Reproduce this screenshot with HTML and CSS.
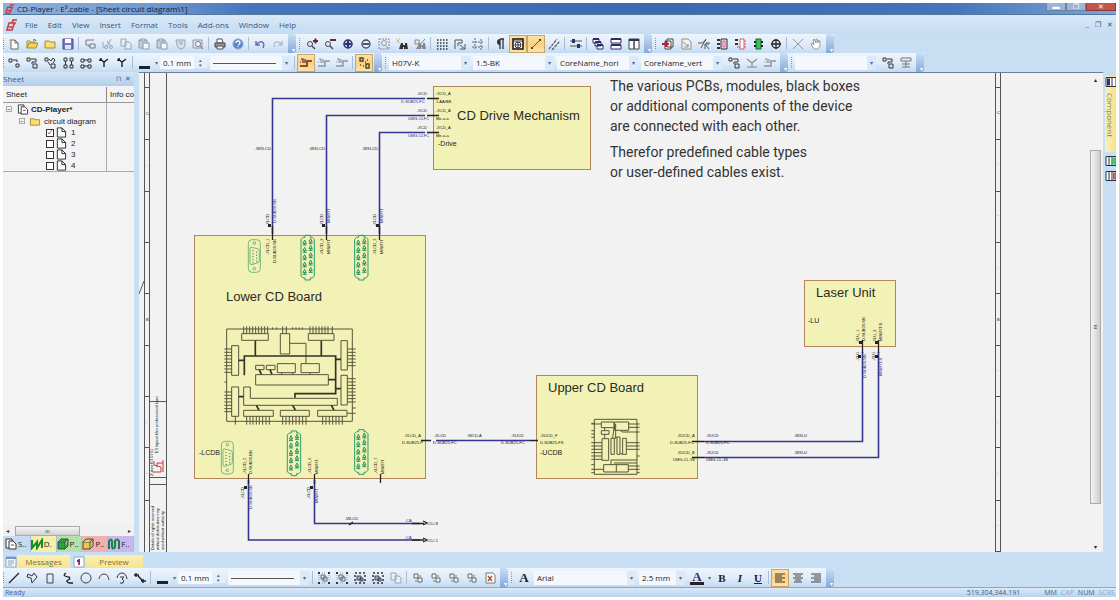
FILE: index.html
```html
<!DOCTYPE html>
<html lang="en">
<head>
<meta charset="utf-8">
<title>CD-Player - E³.cable</title>
<link rel="stylesheet" href="styles.css">
</head>
<body>
<svg class="defs" aria-hidden="true">
  <symbol id="new" viewBox="0 0 12 12"><path d="M3 2h4l3 3v6H3z" fill="#fff" stroke="#666"/><path d="M7 2v3h3" fill="none" stroke="#666"/><path d="M1 3l3-2M2 1l2 3" stroke="#e8a820"/></symbol>
  <symbol id="open" viewBox="0 0 12 12"><path d="M1 10V3h3l1 1h4v2" fill="#f7df86" stroke="#a98a2c"/><path d="M1 10l2-5h9l-2 5z" fill="#f6d25a" stroke="#a98a2c"/><path d="M7 2q3-1 3 1" fill="none" stroke="#447"/></symbol>
  <symbol id="folder" viewBox="0 0 12 12"><path d="M1 10V3h4l1 1h5v6z" fill="#f8dd78" stroke="#a98a2c"/></symbol>
  <symbol id="save" viewBox="0 0 12 12"><path d="M1 1h10v10H1z" fill="#7673c8" stroke="#4a4796"/><path d="M3 1h6v4H3z" fill="#fff"/><path d="M3 7h6v4H3z" fill="#dfe3f8"/></symbol>
  <symbol id="plug" viewBox="0 0 12 12"><path d="M10 2H2v5h3M6 6h5v4H6zM6 8H4" fill="none" stroke="#777"/></symbol>
  <symbol id="cut" viewBox="0 0 12 12"><path d="M9 1L5 8M5 3l4 5M1 4v6" stroke="#9aa6b4" fill="none"/><circle cx="4" cy="9" r="1.5" fill="none" stroke="#9aa6b4"/><circle cx="9" cy="9" r="1.5" fill="none" stroke="#9aa6b4"/></symbol>
  <symbol id="copy" viewBox="0 0 12 12"><path d="M1 1h5v7H1zM5 4h4l2 2v5H5z" fill="#e9eef4" stroke="#9aa6b4"/></symbol>
  <symbol id="paste" viewBox="0 0 12 12"><path d="M1 2h8v8H1z" fill="#c8d0da" stroke="#8d98a6"/><path d="M3 1h4v2H3zM5 5h6v6H5z" fill="#f3f6f9" stroke="#8d98a6"/></symbol>
  <symbol id="shield" viewBox="0 0 12 12"><path d="M2 2h9v5q0 3-4 4-4-1-4-4z" fill="#dde3ea" stroke="#98a3b0"/><path d="M4 4h5M5 6h4" stroke="#98a3b0"/></symbol>
  <symbol id="find" viewBox="0 0 12 12"><path d="M1 2h9v8H1z" fill="#dde3ea" stroke="#8d98a6"/><circle cx="6" cy="6" r="2.5" fill="#fff" stroke="#778"/><path d="M8 8l3 3" stroke="#778"/></symbol>
  <symbol id="print" viewBox="0 0 12 12"><path d="M3 1h5l1 4H3z" fill="#fff" stroke="#555"/><path d="M1 5h10v4H1z" fill="#999" stroke="#444"/><path d="M3 8h6v3H3z" fill="#eee" stroke="#555"/></symbol>
  <symbol id="help" viewBox="0 0 12 12"><circle cx="6" cy="6" r="5" fill="#5687d2" stroke="#8ba5c8"/><path d="M4 5q0-2 2-2t2 2q0 1-2 2M6 8v1" fill="none" stroke="#fff" stroke-width="1.3"/></symbol>
  <symbol id="undo" viewBox="0 0 12 12"><path d="M2 3v4h4M2 7q3-4 6-3t1 6" fill="none" stroke="#5d77ae" stroke-width="1.5"/></symbol>
  <symbol id="redo" viewBox="0 0 12 12"><path d="M10 3v4H6M10 7Q7 3 4 4t-1 5" fill="none" stroke="#a9b5c6" stroke-width="1.2"/></symbol>
  <symbol id="zin" viewBox="0 0 12 12"><circle cx="4" cy="6" r="2.5" fill="none" stroke="#444"/><path d="M6 8l3 3" stroke="#444" stroke-width="1.3"/><path d="M7 3h5M9.500 .5v5" stroke="#701f3c" stroke-width="2"/></symbol>
  <symbol id="zout" viewBox="0 0 12 12"><circle cx="4" cy="6" r="2.500" fill="none" stroke="#444"/><path d="M6 8l3 3" stroke="#444" stroke-width="1.3"/><path d="M6 2h6" stroke="#701f3c" stroke-width="2"/></symbol>
  <symbol id="cplus" viewBox="0 0 12 12"><circle cx="6" cy="6" r="4" fill="#c9cdf0" stroke="#2b2d58" stroke-width="1.5"/><path d="M3 6h6M6 3v6" stroke="#2b2d7a" stroke-width="2"/></symbol>
  <symbol id="cminus" viewBox="0 0 12 12"><circle cx="6" cy="6" r="4" fill="#e6e8f6" stroke="#444664" stroke-width="1.3"/><path d="M3 6h6" stroke="#2b2d58" stroke-width="1.6"/></symbol>
  <symbol id="zarea" viewBox="0 0 12 12"><path d="M1 1h10v10H1z" fill="none" stroke="#888" stroke-dasharray="2 1"/><circle cx="6" cy="5" r="2.5" fill="none" stroke="#999"/><path d="M7 7l3 3" stroke="#999"/></symbol>
  <symbol id="binoc" viewBox="0 0 12 12"><path d="M5 5h2v2h2V5h2l1 6H8V9H7v2H3z" fill="#333"/><path d="M0 1l4 4M4 0L1 5" stroke="#c9cf52"/></symbol>
  <symbol id="binoc2" viewBox="0 0 12 12"><path d="M5 5h2v2h2V5h2l1 6H8V9H7v2H3z" fill="#888"/><path d="M1 2h4v4H1zM2 11L11 1" stroke="#888" fill="none"/></symbol>
  <symbol id="grid" viewBox="0 0 12 12"><path d="M1 2h11M1 5h11M1 8h11M1 11h11" stroke="#333" stroke-width="1.5" stroke-dasharray="1.5 1.5"/></symbol>
  <symbol id="snap" viewBox="0 0 12 12"><path d="M1 11V2h7v3H4v3" fill="none" stroke="#555"/><path d="M6 7l5 4M6 11h5V6" fill="none" stroke="#555"/></symbol>
  <symbol id="cross" viewBox="0 0 12 12"><path d="M3 0v11M9 1v11M0 4h12M0 9h12" stroke="#667" stroke-dasharray="2 1"/></symbol>
  <symbol id="para" viewBox="0 0 12 12"><path d="M6 1h4M6 1v10M9 1v10" stroke="#333" stroke-width="1.3"/><path d="M6 1v6Q3 7 3 4t3-3" fill="#333"/></symbol>
  <symbol id="frame" viewBox="0 0 12 12"><path d="M1 1h10v10H1z" fill="#fff" stroke="#111" stroke-width="1.5"/><circle cx="6" cy="7" r="3" fill="none" stroke="#333"/><path d="M1 3h10M3 7h6M6 4v6" stroke="#333"/></symbol>
  <symbol id="diag" viewBox="0 0 12 12"><path d="M2 10L10 2" stroke="#555"/><path d="M1 9h2v2H1zM9 1h2v2H9z" fill="#444"/></symbol>
  <symbol id="diag2" viewBox="0 0 12 12"><path d="M1 11L9 1M4 12L12 3" stroke="#556" stroke-width="1.2" stroke-dasharray="3 1"/></symbol>
  <symbol id="slide" viewBox="0 0 12 12"><path d="M0 3h12M0 8h12" stroke="#555"/><path d="M2 1h3v4H2zM7 6h3v4H7z" fill="#236"/></symbol>
  <symbol id="casc" viewBox="0 0 12 12"><path d="M1 1h6v4H1zM3 4h6v4H3zM5 7h6v4H5z" fill="#fff" stroke="#2d2f66"/><path d="M1 1h6M3 4h6M5 7h6" stroke="#2d2f66" stroke-width="2"/></symbol>
  <symbol id="tileh" viewBox="0 0 12 12"><path d="M1 1h10v4H1zM1 7h10v4H1z" fill="#fff" stroke="#2d2f66"/><path d="M1 1h10M1 7h10" stroke="#2d2f66" stroke-width="2"/></symbol>
  <symbol id="tilev" viewBox="0 0 12 12"><path d="M1 1h5v10H1zM6 1h5v10H6z" fill="#fff" stroke="#444"/><path d="M1 2h10" stroke="#335" stroke-width="2"/></symbol>
  <symbol id="place" viewBox="0 0 12 12"><path d="M5 1h6v8H5zM3 3h6v8H3z" fill="#fff" stroke="#444"/><path d="M0 6h7M4 3v6" stroke="#b5202c" stroke-width="2"/></symbol>
  <symbol id="doc" viewBox="0 0 12 12"><path d="M2 1h6l3 3v7H2z" fill="#f2f2f2" stroke="#8e8e8e"/><path d="M3 4l6 5M4 9h4V6" fill="none" stroke="#8e8e8e"/></symbol>
  <symbol id="nowire" viewBox="0 0 12 12"><path d="M0 5h4l4-3M8 5h4M3 10L8 1M7 6l4 5M7 11V6h4" fill="none" stroke="#555"/></symbol>
  <symbol id="conn" viewBox="0 0 12 12"><path d="M5 1h6v10H5z" fill="#efd5dc" stroke="#333"/><path d="M7 3h2v6H7z" fill="none" stroke="#c38"  stroke-width=".6"/><path d="M1 2h3M1 6h3M1 10h3" stroke="#333" stroke-width="2"/></symbol>
  <symbol id="connr" viewBox="0 0 12 12"><path d="M6 1h4v10H6z" fill="#fff" stroke="#d65c6d"/><path d="M1 2h3M1 6h3" stroke="#333" stroke-width="2"/><path d="M10 3h2M10 6h2M10 9h2M3 9h3" stroke="#d65c6d"/></symbol>
  <symbol id="chip" viewBox="0 0 12 12"><path d="M4 1h5v10H4z" fill="#3fc454" stroke="#163"/><path d="M2 4h2M2 8h2M9 4h2M9 8h2" stroke="#222" stroke-width="2"/></symbol>
  <symbol id="target" viewBox="0 0 12 12"><circle cx="6" cy="6" r="4" fill="none" stroke="#222" stroke-width="1.3"/><path d="M1 6h10M6 1v10" stroke="#222" stroke-width="1.3"/></symbol>
  <symbol id="x" viewBox="0 0 12 12"><path d="M1 1l10 10M11 1L1 11" stroke="#999"/></symbol>
  <symbol id="hand" viewBox="0 0 12 12"><path d="M4 11L1 6l1-1 2 2-1-5 1-1 2 4V1h1l1 4 1-3 1 1v5l-2 3z" fill="#fff" stroke="#999"/></symbol>
  <symbol id="w1" viewBox="0 0 12 12"><path d="M1 2h3v3H1zM8 7h3v3H8zM5 3h4v2" fill="none" stroke="#333"/></symbol>
  <symbol id="w2" viewBox="0 0 12 12"><path d="M1 1h3v3H1zM7 7h4v4H7zM5 2h5v3H6v2" fill="none" stroke="#333"/></symbol>
  <symbol id="w3" viewBox="0 0 12 12"><path d="M1 1h3v3H1zM7 7h4v4H7zM5 2l2 2 2-3 2 2-2 3M4 5l2 3" fill="none" stroke="#333"/></symbol>
  <symbol id="w4" viewBox="0 0 12 12"><path d="M2 1h3v3H2zM8 1h3v3H8zM2 8h3v3H2zM8 8h3v3H8zM3.500 4v4M9.500 4v4" fill="none" stroke="#333"/></symbol>
  <symbol id="w5" viewBox="0 0 12 12"><path d="M1 2h3v3H1zM8 2h3v3H8zM1 8h3v3H1zM8 8h3v3H8zM4 3h4M4 9h4" fill="none" stroke="#333"/></symbol>
  <symbol id="y" viewBox="0 0 12 12"><path d="M2 2l4 3 4-3M6 5v5M2 2v2M2 2h2" fill="none" stroke="#222" stroke-width="1.4"/></symbol>
  <symbol id="core" viewBox="0 0 12 12"><path d="M0 9h7V4h5" fill="none" stroke="currentColor" stroke-width="1.5"/><path d="M1 2h2v4M5 2v4M0 5h1" fill="none" stroke="currentColor" stroke-width="1.2"/></symbol>
  <symbol id="squares" viewBox="0 0 12 12"><path d="M2 1h3v3H2zM8 7h3v4H8zM9 3h1M2 8h1M5 9h1M7 5h1" fill="none" stroke="#4b4623" stroke-width="1.4"/></symbol>
  <symbol id="join" viewBox="0 0 12 12"><path d="M1 2l5 4 5-4M6 6v4M1 10h10" fill="none" stroke="#888" stroke-width="1.2"/></symbol>
  <symbol id="route" viewBox="0 0 12 12"><path d="M1 1h10v3H1zM6 4v6M2 10h8M2 7h8" fill="none" stroke="#777"/></symbol>
  <symbol id="e3" viewBox="0 0 12 12"><path d="M11 1H7L6 4h3L7 7M7 4H3L1 11h5l1-3H3" fill="none" stroke="#c93b3f" stroke-width="1.6"/></symbol>
  <symbol id="line" viewBox="0 0 12 12"><path d="M1 11L11 1" stroke="#222" stroke-width="1.3"/></symbol>
  <symbol id="poly" viewBox="0 0 12 12"><path d="M2 2l4 2 2-3 3 4-5 6-1-5-4-1z" fill="none" stroke="#333"/></symbol>
  <symbol id="rect" viewBox="0 0 12 12"><path d="M3 2h6v9H3z" fill="none" stroke="#444"/></symbol>
  <symbol id="curve" viewBox="0 0 12 12"><path d="M4 1Q1 3 3 4t4 1q2 2-1 3t1 3l4 0" fill="none" stroke="#222" stroke-width="1.3"/></symbol>
  <symbol id="circ" viewBox="0 0 12 12"><circle cx="6" cy="6" r="5" fill="none" stroke="#444"/></symbol>
  <symbol id="arc" viewBox="0 0 12 12"><path d="M1 7q1-5 5-5t5 6" fill="none" stroke="#444"/></symbol>
  <symbol id="arc3" viewBox="0 0 12 12"><path d="M1 6q1-5 5-5t5 6M4 5h4L6 7q3 1 1 4H4" fill="none" stroke="#333"/></symbol>
  <symbol id="arrows" viewBox="0 0 12 12"><path d="M0 3h5M2 1v4M4 4l4 4M7 9h5M9 7v4" fill="none" stroke="#222" stroke-width="1.4"/></symbol>
  <symbol id="grp" viewBox="0 0 12 12"><path d="M0 1h2M10 1h2M0 11h2M10 11h2" stroke="#333" stroke-width="2"/><path d="M1 3v6M11 3v6M4 1h4M4 11h4" stroke="#99a" stroke-dasharray="1 1"/><path d="M3 3h4v4H3zM5 5h4v4H5z" fill="none" stroke="#667"/></symbol>
  <symbol id="grp2" viewBox="0 0 12 12"><path d="M1 1h10v10H1z" fill="none" stroke="#333" stroke-width="1.5" stroke-dasharray="2 2"/><path d="M3 4h4v4H3zM6 6h3v3H6z" fill="#aab" stroke="#445"/></symbol>
  <symbol id="stack" viewBox="0 0 12 12"><path d="M2 2h4v4H2zM6 6h4v4H6z" fill="#f2f5f8" stroke="#666"/><path d="M8 3v2M4 8v2" stroke="#777"/></symbol>
  <symbol id="sdoc" viewBox="0 0 12 12"><path d="M2 1h7l2 2v8H2z" fill="#fff" stroke="#777"/><path d="M4 4l4 5M8 4L4 9" stroke="#a84a2c" stroke-width="1.3"/></symbol>
  <symbol id="al" viewBox="0 0 12 12"><path d="M1 2h10M1 4h7M1 6h10M1 8h7M1 10h10" stroke="#3c3626" stroke-width="1.2"/></symbol>
  <symbol id="ac" viewBox="0 0 12 12"><path d="M1 2h10M3 4h6M1 6h10M3 8h6M2 10h8" stroke="#444"/></symbol>
  <symbol id="ar" viewBox="0 0 12 12"><path d="M1 2h10M4 4h7M1 6h10M4 8h7M1 10h10" stroke="#444"/></symbol>
  <symbol id="page" viewBox="0 0 12 12"><path d="M2 1h5l4 4v6H2z" fill="#fff" stroke="#222"/><path d="M7 1v4h4" fill="none" stroke="#222"/></symbol>
  <symbol id="pages" viewBox="0 0 12 12"><path d="M1 1h6v9H1z" fill="#fff" stroke="#333"/><path d="M4 3h4l3 3v5H4z" fill="#fff" stroke="#333"/><path d="M6 7h3" fill="none" stroke="#555"/></symbol>
  <symbol id="zig" viewBox="0 0 12 12"><path d="M1 2v8l5-6v6l5-8v8" fill="none" stroke="#178a2b" stroke-width="2"/></symbol>
  <symbol id="cube" viewBox="0 0 12 12"><path d="M1 4h7v7H1z" fill="currentColor" stroke="#353"/><path d="M1 4l3-3h7L8 4M11 1v7l-3 3" fill="currentColor" stroke="#353"/></symbol>
  <symbol id="coil" viewBox="0 0 12 12"><path d="M1 11V3q2-3 3 0v6q1 3 3 0V3q2-3 4 0v8" fill="none" stroke="#1c8144" stroke-width="2"/></symbol>
  <symbol id="win" viewBox="0 0 12 12"><path d="M1 1h10v10H1z" fill="#f3f8ff" stroke="#8fa8c8"/><path d="M1 2h10" stroke="#7794c0" stroke-width="2"/><path d="M3 5h6M3 7h6M3 9h4" stroke="#8d9cb2"/></symbol>
  <symbol id="win2" viewBox="0 0 12 12"><path d="M1 1h10v10H1z" fill="#fff" stroke="#8fa8c8"/><path d="M6 3v6" stroke="#b5334c" stroke-width="2"/><path d="M4 5h3" stroke="#33479c" stroke-width="2"/></symbol>

  <symbol id="db9" viewBox="0 0 38 100" overflow="visible">
    <g fill="none" stroke="#3b9a68" stroke-width="2"><rect x="1" y="1" width="36" height="98" rx="11"/><circle cx="19" cy="11" r="4"/><circle cx="19" cy="88" r="4"/><path d="M6 29q0-7 6-5l18 5q4 1 4 6v29q0 5-4 6l-18 6q-6 1-6-5z"/></g>
    <path d="M15 33v40M26 37v31" stroke="#23543b" stroke-width="3" stroke-dasharray="3 6"/>
  </symbol>
  <symbol id="tri" viewBox="0 0 14 20" overflow="visible"><path d="M7 2l5 10H2zM7 12v5M1 17h12" fill="none" stroke="#23905c" stroke-width="3"/></symbol>
  <symbol id="plug12" viewBox="0 0 44 138" overflow="visible">
    <path d="M2 14L8 8h6V2h16v6h6l6 6v110l-6 6h-6v6H14v-6H8l-6-6z" fill="none" stroke="#2c9c68" stroke-width="3"/>
    <use href="#tri" x="6" y="14" width="14" height="20"/><use href="#tri" x="24" y="10" width="14" height="20"/>
    <use href="#tri" x="6" y="36" width="14" height="20"/><use href="#tri" x="24" y="30" width="14" height="20"/>
    <use href="#tri" x="6" y="58" width="14" height="20"/><use href="#tri" x="24" y="52" width="14" height="20"/>
    <use href="#tri" x="6" y="80" width="14" height="20"/><use href="#tri" x="24" y="74" width="14" height="20"/>
    <use href="#tri" x="6" y="102" width="14" height="20"/><use href="#tri" x="24" y="96" width="14" height="20"/>
  </symbol>
</svg>

<div class="app">
  <header class="title">
    <svg class="logo"><use href="#e3"/></svg>
    <h1>CD-Player - E³.cable - [Sheet circuit diagram\1]</h1>
    <div class="winctl"><button aria-label="Minimize">▬</button><button aria-label="Restore">❐</button><button class="close" aria-label="Close">✕</button></div>
  </header>

  <nav class="menu">
    <svg class="logo"><use href="#e3"/></svg>
    <button>File</button><button>Edit</button><button>View</button><button>Insert</button><button>Format</button><button>Tools</button><button>Add-ons</button><button>Window</button><button>Help</button>
    <span class="mdi"><button aria-label="Minimize sheet">_</button><button aria-label="Restore sheet">❐</button><button aria-label="Close sheet">✕</button></span>
  </nav>

  <div class="bars">
    <div class="bar first">
      <button class="b" aria-label="New"><svg><use href="#new"/></svg></button><button class="b" aria-label="Open"><svg><use href="#open"/></svg></button><button class="b" aria-label="Close project"><svg><use href="#folder"/></svg></button><button class="b" aria-label="Save"><svg><use href="#save"/></svg></button>
      <i class="sep"></i>
      <button class="b" aria-label="Connect"><svg><use href="#plug"/></svg></button><button class="b" aria-label="Cut"><svg><use href="#cut"/></svg></button><button class="b" aria-label="Copy"><svg><use href="#copy"/></svg></button><button class="b" aria-label="Paste"><svg><use href="#paste"/></svg></button><button class="b" aria-label="Paste special"><svg><use href="#paste"/></svg></button><button class="b" aria-label="Protect"><svg><use href="#shield"/></svg></button><button class="b" aria-label="Print preview"><svg><use href="#find"/></svg></button>
      <i class="sep"></i>
      <button class="b" aria-label="Print"><svg><use href="#print"/></svg></button><button class="b" aria-label="Help"><svg><use href="#help"/></svg></button>
      <i class="sep"></i>
      <button class="b" aria-label="Undo"><svg><use href="#undo"/></svg></button><button class="b" aria-label="Redo"><svg><use href="#redo"/></svg></button>
      <i class="cap"></i>
    </div>
    <div class="bar">
      <button class="b" aria-label="Zoom in"><svg><use href="#zin"/></svg></button><button class="b" aria-label="Zoom out"><svg><use href="#zout"/></svg></button><button class="b" aria-label="Larger"><svg><use href="#cplus"/></svg></button><button class="b" aria-label="Smaller"><svg><use href="#cminus"/></svg></button><button class="b" aria-label="Zoom area"><svg><use href="#zarea"/></svg></button><button class="b" aria-label="Find"><svg><use href="#binoc"/></svg></button><button class="b" aria-label="Find next"><svg><use href="#binoc2"/></svg></button>
      <i class="sep"></i>
      <button class="b" aria-label="Grid"><svg><use href="#grid"/></svg></button><button class="b" aria-label="Snap"><svg><use href="#snap"/></svg></button><button class="b" aria-label="Guides"><svg><use href="#cross"/></svg></button>
      <i class="sep"></i>
      <button class="b" aria-label="Marks"><svg><use href="#para"/></svg></button><button class="b on" aria-label="Frame"><svg><use href="#frame"/></svg></button><button class="b on" aria-label="Line mode"><svg><use href="#diag"/></svg></button><button class="b" aria-label="Bus mode"><svg><use href="#diag2"/></svg></button>
      <i class="sep"></i>
      <button class="b" aria-label="Options"><svg><use href="#slide"/></svg></button>
      <i class="sep"></i>
      <button class="b" aria-label="Cascade"><svg><use href="#casc"/></svg></button><button class="b" aria-label="Tile horizontally"><svg><use href="#tileh"/></svg></button><button class="b" aria-label="Tile vertically"><svg><use href="#tilev"/></svg></button>
      <i class="cap"></i>
    </div>
    <div class="bar">
      <button class="b" aria-label="Place sheet"><svg><use href="#place"/></svg></button><button class="b" aria-label="Document"><svg><use href="#doc"/></svg></button><button class="b" aria-label="Remove wire"><svg><use href="#nowire"/></svg></button><button class="b" aria-label="Connector"><svg><use href="#conn"/></svg></button><button class="b" aria-label="Mating connector"><svg><use href="#connr"/></svg></button><button class="b" aria-label="Device"><svg><use href="#chip"/></svg></button><button class="b" aria-label="Target"><svg><use href="#target"/></svg></button>
      <i class="sep"></i>
      <button class="b" aria-label="Delete"><svg><use href="#x"/></svg></button><button class="b" aria-label="Pan"><svg><use href="#hand"/></svg></button>
      <i class="cap"></i>
    </div>
  </div>

  <div class="bars">
    <div class="bar first">
      <button class="b" aria-label="Wire"><svg><use href="#w1"/></svg></button><button class="b" aria-label="Cable"><svg><use href="#w2"/></svg></button><button class="b" aria-label="Bundle"><svg><use href="#w3"/></svg></button><button class="b" aria-label="Vertical pairs"><svg><use href="#w4"/></svg></button><button class="b" aria-label="Horizontal pairs"><svg><use href="#w5"/></svg></button><button class="b" aria-label="Branch"><svg><use href="#y"/></svg></button><button class="b" aria-label="Merge"><svg><use href="#y"/></svg></button>
      <i class="sep"></i>
      <button class="b color" aria-label="Line color"><span></span></button><i class="dd">▾</i>
      <input class="num" value="0.1 mm" aria-label="Line width"><span class="spin"><i>▴</i><i>▾</i></span>
      <span class="combo ln"><select aria-label="Line style"><option></option></select></span>
      <i class="sep"></i>
      <button class="b on" aria-label="Core one"><svg class="brown"><use href="#core"/></svg></button><button class="b" aria-label="Core two"><svg class="grey"><use href="#core"/></svg></button><button class="b" aria-label="Core three"><svg class="grey"><use href="#core"/></svg></button>
      <i class="sep"></i>
      <button class="b on" aria-label="Auto connect"><svg><use href="#squares"/></svg></button>
      <i class="cap"></i>
    </div>
    <div class="bar">
      <span class="combo"><select aria-label="Cable type"><option>H07V-K</option></select></span>
      <span class="combo"><select aria-label="Core type"><option>1.5-BK</option></select></span>
      <span class="combo"><select aria-label="Horizontal name"><option>CoreName_hori</option></select></span>
      <span class="combo"><select aria-label="Vertical name"><option>CoreName_vert</option></select></span>
      <button class="b" aria-label="Route cable"><svg><use href="#w2"/></svg></button><button class="b" aria-label="Join"><svg><use href="#join"/></svg></button><button class="b" aria-label="Split"><svg class="grey"><use href="#core"/></svg></button>
      <i class="cap"></i>
    </div>
    <div class="bar">
      <span class="combo"><select aria-label="Signal"><option></option></select></span>
      <button class="b" aria-label="Assign"><svg><use href="#w2"/></svg></button><button class="b" aria-label="Route"><svg><use href="#route"/></svg></button>
      <i class="cap"></i>
    </div>
  </div>

  <main class="work">
    <aside class="side">
      <div class="phead"><h2>Sheet</h2><span>⊓&nbsp; ✕</span></div>
      <div class="cols"><span>Sheet</span><span>Info co</span></div>
      <ul class="tree">
        <li class="root"><i class="pm">−</i><svg><use href="#pages"/></svg><b>CD-Player*</b></li>
        <li class="l2"><i class="pm">−</i><svg><use href="#folder"/></svg>circuit diagram</li>
        <li class="l3"><label><input type="checkbox" checked><svg><use href="#page"/></svg>1</label></li>
        <li class="l3"><label><input type="checkbox"><svg><use href="#page"/></svg>2</label></li>
        <li class="l3"><label><input type="checkbox"><svg><use href="#page"/></svg>3</label></li>
        <li class="l3"><label><input type="checkbox"><svg><use href="#page"/></svg>4</label></li>
      </ul>
      <div class="hscroll"><i>◂</i><span>ııı</span><i class="end">▸</i></div>
      <div class="ptabs">
        <button><svg><use href="#pages"/></svg>S..</button><button class="yel"><svg><use href="#zig"/></svg>D.</button><button class="grn"><svg><use href="#cube"/></svg>P..</button><button class="red"><svg><use href="#cube"/></svg>P..</button><button class="vio"><svg><use href="#coil"/></svg>F..</button>
      </div>
    </aside>

    <section class="sheet">
      <svg class="draw">
        <g transform="translate(-139 -73)">
          <g class="thin">
            <path d="M144.500 73V552M149.500 73V552M166.500 73V552M995.500 73V551M1000.500 73V551M995 551.500h6M149 401.500h17M149 477.500h17M149 484.500h17M139 294l5-13"/>
            <path d="M144 87.500h5M144 139.500h5M144 191.500h5M144 242.500h5M144 293.500h5M144 345.500h5M144 396.500h5M144 447.500h5M144 500.500h5"/>
            <path d="M995 87.500h5M995 139.500h5M995 191.500h5M995 242.500h5M995 293.500h5M995 345.500h5M995 396.500h5M995 447.500h5M995 500.500h5"/>
          </g>
          <g class="tiny">
            <text x="997" y="114">C</text><text x="997" y="165">-</text><text x="997" y="216">-</text><text x="997" y="268">-</text><text x="997" y="321">B</text><text x="997" y="371">-</text><text x="997" y="423">-</text><text x="997" y="474">-</text><text x="997" y="526">-</text>
            <text x="146" y="115">C</text><text x="146" y="166">-</text><text x="146" y="321">B</text><text x="146" y="423">-</text><text x="146" y="474">-</text>
            <text transform="translate(153 476) rotate(-90)">Zuken E3 0731</text>
            <text transform="translate(158 453) rotate(-90)">E3 layout files professional lines</text>
            <text transform="translate(154 550) rotate(-90)">Details of rights reserved</text>
            <text transform="translate(159 550) rotate(-90)">without distribution may</text>
            <text transform="translate(164 550) rotate(-90)">used without authority</text>
          </g>
          <path d="M153 472h8v-5l-7-2v-4M157 467v-4h6v-3M163 463v9" fill="none" stroke="#c3393c"/>

          <g class="board">
            <rect x="194.500" y="235.500" width="231" height="243"/>
            <rect x="433.500" y="86.500" width="157" height="83"/>
            <rect x="536.500" y="375.500" width="161" height="103"/>
            <rect x="804.500" y="280.500" width="91" height="66"/>
          </g>

          <g class="wire">
            <path d="M425 98.500H272.500V234M425 115.500H326.500V234M425 132.500H379.500V234"/>
            <path d="M248.500 480V540H420M314.500 480V523.500H420M436 440.500H530"/>
            <path d="M704 441.500H862.500V352M704 457.500H878.500V352"/>
          </g>
          <g class="stub">
            <path d="M427 98.500h12M427 115.500h12M427 132.500h12M272.500 226v14M326.500 226v14M379.500 226v14M248.500 474v10M314.500 474v10M380.500 474v9"/>
            <path d="M421 440.500h10M530 440.500h8M692 441.500h12M692 457.500h12M862.500 340v13M878.500 340v13M412 523.500h12M412 540h12"/>
            <path d="M423 521l4 2-4 2M423 538l4 2-4 2M349 525l4-3M222 149"/>
          </g>

          <g class="tiny">
            <text x="417" y="94.500">-XCD</text><text x="436" y="94.500">-XCD_A</text><text x="436" y="102.500">1.AA/BB</text>
            <text x="417" y="111.500">-XCD</text><text x="436" y="111.500">-XCD_A</text><text x="436" y="119.500">Me-a-a</text>
            <text x="417" y="128.500">-XCD</text><text x="436" y="128.500">-XCD_A</text><text x="436" y="136.500">Me-a-a</text>
            <text x="255" y="150">-WXLCD</text><text x="309" y="150">-WXLCD</text><text x="362" y="150">-WXLCD</text>
            <text x="404" y="437">-XLCD_A</text><text x="402" y="444">D-SUB25-P</text><text x="434" y="437">-XLCD</text><text x="433" y="444">D-SUB25-FC</text><text x="467" y="437">-WCD.A</text>
            <text x="511" y="437">-XUCD</text><text x="501" y="444">D-SUB25-FC</text><text x="540" y="437">-XUCD_F</text><text x="540" y="444">D-SUB25-FS</text>
            <text x="677" y="437">-XUCD_A</text><text x="670" y="444">D-SUB25-FC</text><text x="677" y="454">-XUCD_B</text><text x="673" y="461">UMG-CL-3S</text>
            <text x="706" y="437">-XUCD</text><text x="706" y="444">D-SUB25-FC</text><text x="706" y="454">-XUCD</text><text x="706" y="461">UMG-CL-3S</text>
            <text x="794" y="437">-WXLU</text><text x="794" y="454">-WXLU</text><text x="345" y="520">-WLCD</text><text x="427" y="525">-CL/.8</text><text x="427" y="542">-CL/.1</text>
            <text transform="translate(269 226) rotate(-90)">-XLCD</text><text transform="translate(323 226) rotate(-90)">-XLCD</text><text transform="translate(376 226) rotate(-90)">-XLCD</text>
            <text transform="translate(269 255) rotate(-90)">-XLCD_1</text><text transform="translate(276 263) rotate(-90)">D-SUB09-SN</text>
            <text transform="translate(323 255) rotate(-90)">-XLCD_2</text><text transform="translate(330 254) rotate(-90)">MINIFIT</text>
            <text transform="translate(376 255) rotate(-90)">-XLCD_3</text><text transform="translate(383 254) rotate(-90)">MINIFIT</text>
            <text transform="translate(246 474) rotate(-90)">-XLCD_5</text><text transform="translate(252 474) rotate(-90)">D-SUB09-BN</text>
            <text transform="translate(311 474) rotate(-90)">-XLCD_6</text><text transform="translate(318 474) rotate(-90)">MINIFIT</text>
            <text transform="translate(377 474) rotate(-90)">-XLCD_7</text><text transform="translate(384 474) rotate(-90)">MINIFIT</text>
            <text transform="translate(244 499) rotate(-90)">-XLCD</text><text transform="translate(310 499) rotate(-90)">-XLCD</text>
            <text transform="translate(859 343) rotate(-90)">-XLU_1</text><text transform="translate(865 341) rotate(-90)">D-SUB09-SN</text><text transform="translate(876 343) rotate(-90)">-XLU_2</text><text transform="translate(882 341) rotate(-90)">MINIFIT-S</text>
            <text transform="translate(859 361) rotate(-90)">-XLU</text><text transform="translate(875 361) rotate(-90)">-XLU</text>
          </g>
          <g class="tiny blue">
            <text x="401" y="102.500">D-SUB25-FC</text><text x="408" y="119.500">UMG-CLFC</text><text x="408" y="136.500">UMG-CLFC</text><text x="405" y="539">.CA</text><text x="405" y="522">.CA</text>
            <text transform="translate(276 223) rotate(-90)">D-SUB09-SN</text><text transform="translate(330 223) rotate(-90)">MINIFIT</text><text transform="translate(383 223) rotate(-90)">MINIFIT</text>
            <text transform="translate(252 509) rotate(-90)">D-SUB09-SN</text><text transform="translate(318 503) rotate(-90)">MINIFIT</text>
            <text transform="translate(866 378) rotate(-90)">D-SUB09-SN</text><text transform="translate(882 376) rotate(-90)">MINIFIT-S</text>
          </g>
          <path class="dots" d="M268 224h3v3h-3zM322 224h3v3h-3zM376 224h3v3h-3zM244 486h3v3h-3zM310 486h3v3h-3zM858 355h3v3h-3zM875 355h3v3h-3zM859 341h3v3h-3zM875 341h3v3h-3z"/>

          <g class="head">
            <text x="457" y="120">CD Drive Mechanism</text><text x="226" y="301">Lower CD Board</text><text x="548" y="392">Upper CD Board</text><text x="816" y="297">Laser Unit</text>
          </g>
          <g class="tag"><text x="438" y="146">-Drive</text><text x="199" y="455">-LCDB</text><text x="540" y="455">-UCDB</text><text x="808" y="323">-LU</text></g>
          <g class="note">
            <text x="610" y="91">The various PCBs, modules, black boxes</text><text x="610" y="111">or additional components of the device</text><text x="610" y="131">are connected with each other.</text>
            <text x="610" y="157">Therefor predefined cable types</text><text x="610" y="177">or user-defined cables exist.</text>
          </g>

          <g class="pcb" transform="translate(190 230) scale(.3333)">
            <path d="M110 297H487V574H110z"/>
            <path d="M155 311h80v20h-80zM355 311h77v20h-77zM271 311h28v61h-28zM125 347h21v89h-21zM453 332h19v88h-19zM453 436h19v89h-19zM125 471h21v88h-21z"/>
            <path d="M161 471h20v34H442V526H161zM161 541h89v18h-89zM271 541h87v18h-87zM383 541h88v18h-88zM197 434H415v31H197zM197 406h25v13h-25zM229 406h26v13h-26zM262 401h54v27h-54zM333 401h55v27h-55z"/>
            <path d="M300 340h48v61M275 434v-6M308 434v-6M360 434v-6"/>
            <path class="thick" d="M163 436V378H437V491H315v12M196 332v46M394 332v46M146 391h17M437 388h16M437 476h16M415 449h22M208 419l6 14M240 419l6 14M146 500h15M199 526l8 14M308 526l8 14M424 526l8 14"/>
            <path d="M161 289v22M170 289v22M179 289v22M188 289v22M197 289v22M206 289v22M215 289v22M224 289v22M233 289v22M278 289v22M289 289v22M248 292v6M260 292v6M308 292v6M318 292v6M328 292v6M337 292v6M360 289v22M369 289v22M378 289v22M387 289v22M396 289v22M405 289v22M414 289v22M427 289v22"/>
            <path d="M170 559v25M180 559v25M189 559v25M199 559v25M208 559v25M218 559v25M228 559v25M238 559v25M278 559v25M288 559v25M298 559v25M308 559v25M318 559v25M328 559v25M338 559v25M348 559v25M398 559v25M408 559v25M418 559v25M428 559v25M438 559v25M447 559v25M457 559v25M136 559v25"/>
            <path d="M103 357h22M103 367h22M103 377h22M103 387h22M103 397h22M103 407h22M103 417h22M103 427h22M103 456h8M103 486h22M103 496h22M103 506h22M103 516h22M103 526h22M103 536h22M103 545h22"/>
            <path d="M472 357h25M472 367h25M472 377h25M472 387h25M472 397h25M472 407h25M472 446h25M472 456h25M472 466h25M472 476h25M472 486h25M472 496h25M472 506h25M472 516h25M486 534h11M472 550h25"/>
            <use href="#db9" x="174" y="28" width="38" height="100"/><use href="#db9" x="93" y="633" width="38" height="100"/>
            <use href="#plug12" x="331" y="14" width="44" height="138"/><use href="#plug12" x="492" y="14" width="44" height="138"/><use href="#plug12" x="290" y="601" width="44" height="138"/><use href="#plug12" x="492" y="597" width="44" height="138"/>
          </g>
          <g class="pcb" transform="translate(400 360) scale(.3333)">
            <path d="M583 178H711V343H583zM604 186h38v17h-38zM644 186h42v25h-42zM604 212h23v11h-23zM606 236h20v65h-20zM633 235h10v48h-10zM651 231h9v52h-9zM668 235h11v48h-11zM611 314h74v22h-74zM649 314v22"/>
            <path d="M614 203v9M614 223v13M642 203l-4 32M643 235l8-4M660 280l8 3M633 300v14M633 300h78M642 309h69M647 192v44M660 211l8 5h43"/>
            <path d="M574 192h30M574 212h9M574 222h9M574 190h9M574 232h9M574 248h32M574 258h32M574 268h32M574 278h32M574 288h32M574 298h32M574 314h9M574 328h37M574 338h9"/>
            <path d="M686 192h33M686 202h33M711 216h8M679 248h40M679 258h40M679 268h40M711 288h8M685 318h34M685 328h34M711 338h8"/>
          </g>
        </g>
      </svg>
      <div class="vscroll"><i>▴</i><span>≡</span><i class="end">▾</i></div>
    </section>

    <aside class="dock">
      <button class="yel"><svg viewBox="0 0 11 11"><path d="M1 1h10v9H1z" fill="#fff" stroke="#333"/><path d="M2 2h3v7H2z" fill="#2f2d9c"/><path d="M7 1v9" stroke="#333"/></svg><span>Component</span></button>
      <button aria-label="Devices"><svg viewBox="0 0 11 11"><path d="M1 1h10v9H1z" fill="#fff" stroke="#234"/><path d="M4 1v9M7 1v9" stroke="#234"/><path d="M7 2h4v7H7z" fill="#45c46a"/></svg></button>
      <button aria-label="Connectors"><svg viewBox="0 0 11 11"><path d="M1 1h10v9H1z" fill="#fff" stroke="#234"/><path d="M4 1v9M7 1v9" stroke="#234"/><path d="M8 2h3v7H8z" fill="#d2535f"/></svg></button>
    </aside>
  </main>

  <div class="mtabs">
    <button class="ico" aria-label="Messages window"><svg><use href="#win"/></svg></button><button class="msg">Messages</button><button class="ico" aria-label="Preview window"><svg><use href="#win2"/></svg></button><button class="pre">Preview</button>
  </div>

  <div class="bars bottom">
    <div class="bar first">
      <button class="b" aria-label="Line"><svg><use href="#line"/></svg></button><button class="b" aria-label="Polygon"><svg><use href="#poly"/></svg></button><button class="b" aria-label="Rectangle"><svg><use href="#rect"/></svg></button><button class="b" aria-label="Curve"><svg><use href="#curve"/></svg></button><button class="b" aria-label="Circle"><svg><use href="#circ"/></svg></button><button class="b" aria-label="Arc"><svg><use href="#arc"/></svg></button><button class="b" aria-label="Three point arc"><svg><use href="#arc3"/></svg></button><button class="b" aria-label="Edit points"><svg><use href="#arrows"/></svg></button>
      <i class="sep"></i>
      <button class="b color" aria-label="Shape color"><span></span></button><i class="dd">▾</i>
      <input class="num" value="0.1 mm" aria-label="Shape line width"><span class="spin"><i>▴</i><i>▾</i></span>
      <span class="combo ln"><select aria-label="Shape line style"><option></option></select></span>
      <i class="sep"></i>
      <button class="b" aria-label="Group"><svg><use href="#grp"/></svg></button><button class="b" aria-label="Ungroup"><svg><use href="#grp"/></svg></button><button class="b" aria-label="Add to group"><svg><use href="#grp2"/></svg></button><button class="b" aria-label="Remove from group"><svg><use href="#grp2"/></svg></button><button class="b" aria-label="Regroup"><svg><use href="#copy"/></svg></button>
      <i class="sep"></i>
      <button class="b" aria-label="Bring to front"><svg><use href="#stack"/></svg></button><button class="b" aria-label="Send to back"><svg><use href="#stack"/></svg></button><button class="b" aria-label="Forward"><svg><use href="#stack"/></svg></button><button class="b" aria-label="Backward"><svg><use href="#stack"/></svg></button><button class="b" aria-label="Remove image"><svg><use href="#sdoc"/></svg></button>
      <i class="cap"></i>
    </div>
    <div class="bar">
      <button class="b serif">A</button>
      <span class="combo font"><select aria-label="Font"><option>Arial</option></select></span>
      <span class="combo size"><select aria-label="Text size"><option>2.5 mm</option></select></span>
      <button class="b serif tc">A</button><i class="dd">▾</i>
      <button class="b serif sm">B</button><button class="b serif sm it">I</button><button class="b serif sm un">U</button>
      <i class="sep"></i>
      <button class="b on" aria-label="Align left"><svg><use href="#al"/></svg></button><button class="b" aria-label="Align center"><svg><use href="#ac"/></svg></button><button class="b" aria-label="Align right"><svg><use href="#ar"/></svg></button>
      <i class="cap"></i>
    </div>
  </div>

  <footer class="status"><span class="ready">Ready</span><span class="pos">519.304,344.191</span><span>MM</span><span class="off">CAP</span><span>NUM</span><span class="off">SCRE</span></footer>
</div>
</body>
</html>
```
FILE: styles.css
```css
* { box-sizing: border-box; }
body { margin: 0; background: #fff; font: 8px/10px "Open Sans", "Noto Sans", sans-serif; color: #222; }
button, input, select { font: inherit; color: inherit; margin: 0; padding: 0; border: 0; background: none; border-radius: 0; }
i { font-style: normal; }
.defs { position: absolute; width: 0; height: 0; }
.app { height: 100vh; padding: 3px; display: flex; flex-direction: column; overflow: hidden; }
.app svg { display: block; flex: none; }

.title { flex: 0 0 12px; display: flex; align-items: center; background: linear-gradient(90deg, #8fb0dc, #6f98d0 14%, #4675bd 22%, #3b6ab3 60%, #4474ba 85%, #7fa5d6); border-bottom: 1px solid #54779f; overflow: hidden; }
.title h1 { margin: 0; font-size: 8px; line-height: 10px; font-weight: 400; color: #10233f; white-space: nowrap; }
.logo { width: 10px; height: 10px; margin: 0 2px; }
.winctl { margin-left: auto; display: flex; height: 8px; align-self: flex-start; font-size: 7px; line-height: 7px; color: #fff; }
.winctl button { width: 20px; border: 1px solid #6d84a6; border-top: 0; background: #9cb5d6; overflow: hidden; }
.winctl .close { width: 30px; background: #c3554c; border-color: #8d3a36; }

.menu { flex: 0 0 19px; display: flex; align-items: center; background: linear-gradient(#d8e8f8, #c6dcf1); color: #37587f; }
.menu .logo { width: 12px; height: 12px; margin: 0 7px 0 3px; }
.menu > button { margin-right: 10px; }
.mdi { margin: 0 3px 0 auto; display: flex; gap: 6px; font-size: 7px; }

.bars { flex: 0 0 19px; display: flex; background: #c8def3; }
.bar { display: flex; align-items: center; flex: none; padding-left: 7px; background: linear-gradient(#edf5fd, #deebf9 55%, #c3daf3) no-repeat; position: relative; }
.bar::before { content: ""; position: absolute; left: 3px; top: 4px; bottom: 4px; border-left: 1px dotted #8095b4; }
.bar.first { padding-left: 2px; }
.bar.first::before { left: 0; }
.b { flex: none; width: 18px; height: 18px; display: grid; place-items: center; }
.b svg { width: 12px; height: 12px; }
.b.on { background: linear-gradient(#fde0a6, #fbcf83 50%, #fde3a8); border: 1px solid #c7a468; }
.brown { color: #5a2c1c; }
.grey { color: #8c95a0; }
.sep { flex: none; width: 1px; height: 13px; background: #a7bdd8; margin: 0 2px 0 1px; }
.cap { align-self: stretch; width: 8px; margin-left: 1px; background: linear-gradient(#c9def6, #86a9d7); border-radius: 0 3px 3px 0; position: relative; }
.cap::after { content: "▾"; position: absolute; right: 1px; bottom: 0; font-size: 6px; line-height: 6px; color: #fff; }
.color { align-items: end; padding-bottom: 3px; }
.color span { width: 11px; height: 3px; background: #1d222a; }
.dd { width: 7px; font-size: 6px; color: #4a6c9a; text-align: center; }
.num { width: 34px; height: 13px; background: #f5f9fd; padding-left: 3px; font-size: 8px; }
.spin { width: 13px; display: grid; font-size: 5px; line-height: 5px; color: #4a6080; text-align: center; background: #e5effa; }
.combo { position: relative; flex: none; width: 81px; height: 14px; margin-right: 3px; background: #f4f8fc; }
.combo select { appearance: none; width: 100%; height: 100%; padding: 0 12px 0 3px; display: block; }
.combo::after { content: "▾"; position: absolute; right: 0; top: 0; bottom: 0; width: 9px; background: #dbe9f8; color: #4a6c9a; font-size: 6px; line-height: 14px; text-align: center; pointer-events: none; }
.combo.ln { margin: 0 2px 0 3px; }
.combo.ln::before { content: ""; position: absolute; left: 3px; right: 15px; top: 7px; border-top: 1px solid #555; }
.combo.font { width: 102px; margin-left: 1px; }
.combo.size { width: 46px; }
.serif { font: bold 13px/16px "Liberation Serif", serif; }
.serif.sm { font-size: 11px; }
.it { font-style: italic; }
.un { text-decoration: underline; }
.tc { color: #33306e; border-bottom: 3px solid #222; height: 14px; width: 14px; margin: 0 2px; line-height: 11px; }

.work { flex: 1; min-height: 0; display: flex; background: #c8def3; }
.side { flex: 0 0 131px; display: flex; flex-direction: column; background: #f3f3f3; }
.phead { height: 14px; display: flex; justify-content: space-between; align-items: center; padding-right: 3px; background: linear-gradient(#d5e5f6, #b3cfec); color: #3e608c; margin-bottom: 1px; }
.phead h2 { margin: 0; font-size: 8px; font-weight: 400; }
.phead span { font-size: 7px; }
.cols { display: flex; height: 16px; border-bottom: 1px solid #999; font-family: "Liberation Sans", sans-serif; align-items: center; flex: none; }
.cols span { padding-left: 3px; flex: 0 0 103px; }
.cols span + span { border-left: 1px solid #888; flex: 1; line-height: 15px; white-space: nowrap; overflow: hidden; }
.tree { list-style: none; margin: 0; padding: 0; font: 8px/11px "Liberation Sans", sans-serif; border-bottom: 1px solid #aaa; background: linear-gradient(#aaa, #aaa) 103px 0 / 1px 100% no-repeat; }
.tree li, .tree label { display: flex; align-items: center; height: 11px; }
.tree svg { width: 12px; height: 11px; margin-right: 3px; }
.tree .root { height: 12px; padding-left: 3px; }
.tree .root svg { margin: 0 2px 0 5px; }
.tree .l2 { height: 12px; padding-left: 16px; }
.tree .l2 svg { margin: 0 3px 0 4px; }
.tree .l3 { padding-left: 43px; }
.tree .l3 svg { margin: 0 4px 0 1px; }
.pm { width: 6px; height: 6px; border: 1px solid #aaa; font-size: 6px; line-height: 4px; text-align: center; }
.tree input { appearance: none; width: 8px; height: 8px; border: 1px solid #333; background: #fff; display: grid; place-items: center; }
.tree input:checked::after { content: "✓"; color: #b5283a; font-size: 8px; line-height: 6px; }
.hscroll { margin-top: auto; height: 11px; display: flex; align-items: center; background: #f0f0f0; font-size: 6px; color: #333; padding: 0 3px; }
.hscroll span { width: 65px; height: 10px; margin-left: 6px; border: 1px solid #aaa; background: linear-gradient(#f5f5f5, #d2d2d2); text-align: center; line-height: 8px; }
.hscroll .end { margin-left: auto; }
.ptabs { height: 16px; display: flex; background: #c5dbf1; padding-left: 2px; flex: none; }
.ptabs button { flex: 1; display: flex; align-items: center; gap: 1px; border-right: 1px solid #a8bdd8; white-space: nowrap; overflow: hidden; }
.ptabs svg { width: 12px; height: 12px; }
.ptabs .yel { background: #f4f0a5; }
.ptabs .grn { background: #b2e2ac; }
.ptabs .grn svg { color: #2ea043; }
.ptabs .red { background: #f3b0b3; }
.ptabs .red svg { color: #f0c850; }
.ptabs .vio { background: #c9b8ec; }

.sheet { flex: 1; min-width: 0; margin-left: 5px; display: flex; background: #f2f2f2; border-top: 1px solid #6b7f99; }
.app .draw { flex: 1; min-width: 0; height: 100%; overflow: hidden; }
.vscroll { flex: 0 0 13px; display: flex; flex-direction: column; align-items: center; padding: 2px 2px 0 0; font-size: 6px; line-height: 10px; }
.vscroll span { width: 11px; flex: 0 1 354px; margin-top: 65px; border: 1px solid #aaa; background: linear-gradient(90deg, #f4f4f4, #cdcdcd); display: grid; place-items: center; }
.vscroll .end { margin-top: auto; }
.dock { flex: 0 0 13px; padding: 4px 0 0 2px; display: flex; flex-direction: column; gap: 3px; }
.dock button { width: 11px; }
.dock svg { width: 11px; height: 12px; }
.dock .yel { height: 76px; background: linear-gradient(90deg, #f8f0bd, #f6e38d); display: flex; flex-direction: column; align-items: center; gap: 5px; }
.dock span { writing-mode: vertical-rl; color: #7c7c58; line-height: 11px; }

.thin { stroke: #555; fill: none; }
.board { fill: #f3f2b6; stroke: #b08560; }
.wire { stroke: #35368f; stroke-width: 1.6; fill: none; }
.stub { stroke: #222; stroke-width: 1.3; fill: none; }
.tiny { font: 4px "Liberation Sans", sans-serif; fill: #111; }
.tiny.blue { fill: #26277a; }
.dots { fill: #222; }
.head { font: 13px "Liberation Sans", sans-serif; fill: #2b2b24; }
.tag { font: 7px "Liberation Sans", sans-serif; fill: #222; }
.note { font: 14px Roboto, sans-serif; fill: #333; }
.pcb { fill: none; stroke: #55543a; stroke-width: 3; }
.pcb .thick { stroke: #333224; stroke-width: 5; }

.mtabs { flex: 0 0 16px; display: flex; align-items: end; background: #c8def3; padding-left: 2px; }
.mtabs button { height: 13px; color: #77703f; background: linear-gradient(#fbf0b4, #f8e48e); }
.mtabs .ico { background: none; }
.mtabs svg { width: 12px; height: 12px; }
.mtabs .msg { width: 53px; margin-right: 3px; }
.mtabs .pre { width: 58px; }
.bottom { flex-basis: 20px; border-bottom: 1px solid #8ba8c8; }
.status { flex: 0 0 9px; display: flex; gap: 4px; background: linear-gradient(#dbe9f8, #b9d2ee); color: #3c5f90; font-size: 7px; line-height: 9px; padding: 0 1px 0 2px; white-space: nowrap; }
.status .pos { margin: 0 20px 0 auto; }
.status .off { color: #93a9c4; }
```
